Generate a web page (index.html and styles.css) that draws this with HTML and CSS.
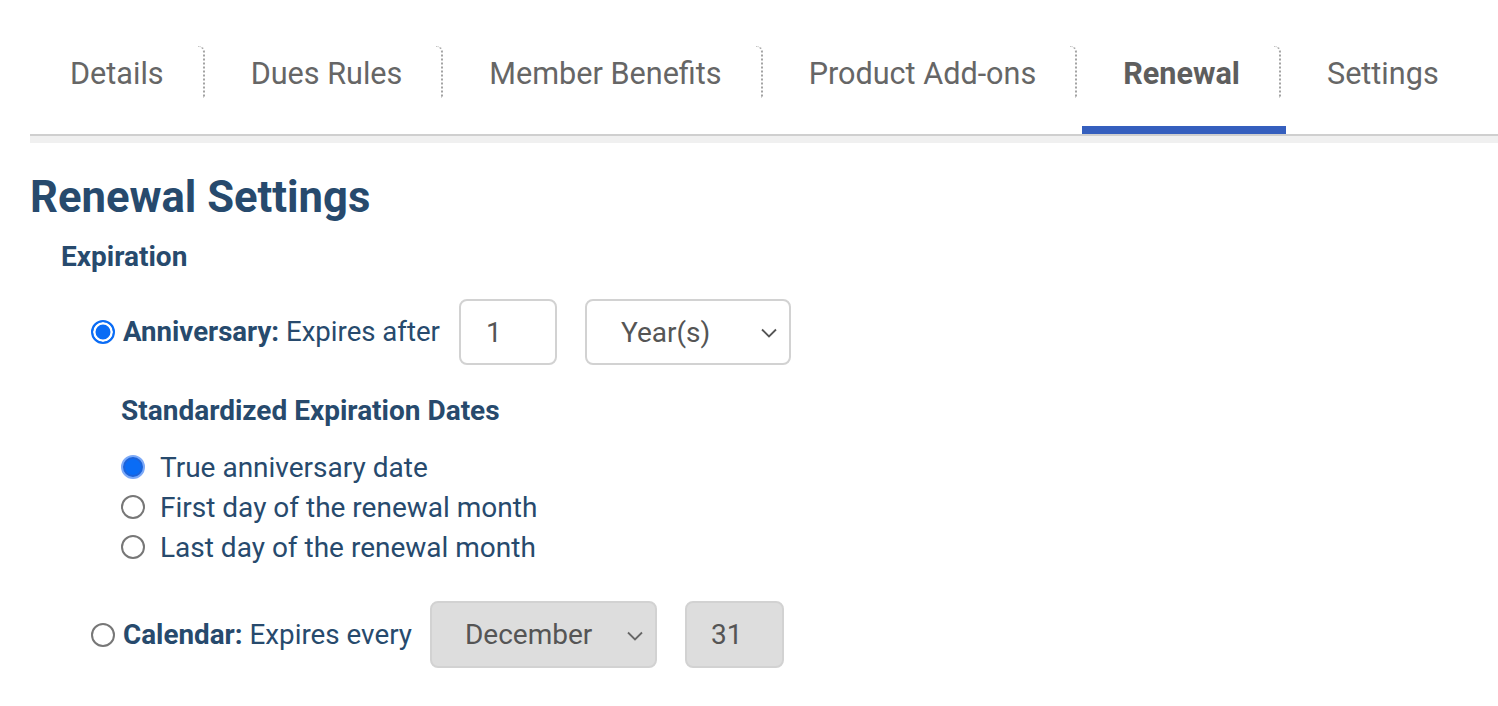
FILE: index.html
```html
<!DOCTYPE html>
<html lang="en">
<head>
<meta charset="utf-8">
<title>Renewal Settings</title>
<link rel="stylesheet" href="styles.css">
</head>
<body>
<div class="page">
  <nav class="tabs">
    <a class="tab first" href="#">Details</a>
    <a class="tab" href="#">Dues Rules</a>
    <a class="tab" href="#">Member Benefits</a>
    <a class="tab" href="#">Product Add-ons</a>
    <a class="tab active" href="#">Renewal</a>
    <a class="tab last" href="#">Settings</a>
  </nav>
  <div class="tab-band"></div>

  <h1 class="title">Renewal Settings</h1>
  <h2 class="section">Expiration</h2>

  <div class="row">
    <input type="radio" name="exp" class="radio radio-focus" checked>
    <span class="label"><b>Anniversary:</b> Expires after</span>
    <input type="text" class="field num" value="1">
    <span class="select year">Year(s)
      <svg class="chev" viewBox="0 0 16 10" width="16" height="10"><path d="M1 1.5 L8 8.5 L15 1.5" fill="none" stroke="#555" stroke-width="1.8"/></svg>
    </span>
  </div>

  <h3 class="subsection">Standardized Expiration Dates</h3>
  <div class="options">
    <label class="opt"><input type="radio" name="std" class="radio radio-fill" checked><span>True anniversary date</span></label>
    <label class="opt"><input type="radio" name="std" class="radio"><span>First day of the renewal month</span></label>
    <label class="opt"><input type="radio" name="std" class="radio"><span>Last day of the renewal month</span></label>
  </div>

  <div class="row cal">
    <input type="radio" name="exp" class="radio">
    <span class="label"><b>Calendar:</b> Expires every</span>
    <span class="select month disabled">December
      <svg class="chev" viewBox="0 0 16 10" width="16" height="10"><path d="M1 1.5 L8 8.5 L15 1.5" fill="none" stroke="#666" stroke-width="1.8"/></svg>
    </span>
    <input type="text" class="field day disabled" value="31" disabled>
  </div>
</div>
</body>
</html>
```

FILE: styles.css
```css
* { box-sizing: border-box; }
html, body { margin: 0; padding: 0; background: #fff; }
body { font-family: Roboto, "Liberation Sans", Arial, sans-serif; color: #274a6d; }

.page { padding-left: 30px; }

.tabs {
  display: flex;
  margin-top: 40px;
  border-bottom: 2px solid #cfcfcf;
}
.tab-band { height: 7px; background: #f0f0f0; }

.tab {
  position: relative;
  display: block;
  padding: 6px 46px 24px 41px;
  font-size: 30.6px;
  line-height: 56px;
  color: #666;
  text-decoration: none;
  border-bottom: 8px solid transparent;
}
.tab.first { padding-left: 40px; }
.tab::after {
  content: "";
  position: absolute;
  top: 6px;
  right: 5px;
  width: 5px;
  height: 51px;
  border-right: 2px dotted #a3a3a3;
  border-top: 1px dotted #c4c4c4;
  border-top-right-radius: 6px;
}
.tab.last::after { display: none; }
.tab.active {
  font-weight: 700;
  color: #5e5e5e;
  border-bottom-color: #355fbe;
}

.title {
  margin: 29px 0 0 0;
  font-size: 43.6px;
  line-height: 52px;
  font-weight: 700;
  color: #274a6d;
}
.section {
  margin: 17px 0 0 31px;
  font-size: 28px;
  line-height: 32px;
  font-weight: 700;
  color: #274a6d;
}

.row {
  display: flex;
  align-items: center;
  margin: 26px 0 0 61px;
  height: 66px;
}
.row.cal { margin-top: 34px; height: 67px; }

.label {
  font-size: 27.6px;
  line-height: 40px;
  color: #274a6d;
  margin-left: 8px;
}
.row.cal .label { font-size: 27.8px; }
.label b { font-weight: 700; }

.radio {
  -webkit-appearance: none;
  appearance: none;
  margin: 0;
  flex: none;
  width: 24px;
  height: 24px;
  border-radius: 50%;
  border: 2px solid #777;
  background: #fff;
}
.radio-focus {
  border: 2.5px solid #0a6cf5;
  background: #0a6cf5;
  box-shadow: inset 0 0 0 2.5px #fff;
}
.radio-fill {
  border: 2px solid #7eaaf7;
  background: #0a6cf5;
  box-shadow: inset 0 0 0 2px #1e63d8;
}

.field {
  font-family: Roboto, "Liberation Sans", Arial, sans-serif;
  font-size: 28px;
  color: #555;
  height: 66px;
  border: 2px solid #d2d2d2;
  border-radius: 8px;
  background: #fff;
  padding: 0 0 0 25px;
  outline: none;
}
.field.num { width: 98px; margin-left: 19px; }
.field.day { width: 99px; height: 67px; margin-left: 28px; padding-left: 24px; }
.field.disabled { background: #dddddd; color: #555; }

.select {
  position: relative;
  display: flex;
  align-items: center;
  height: 66px;
  border: 2px solid #d2d2d2;
  border-radius: 8px;
  background: #fff;
  font-size: 28px;
  color: #555;
  padding-left: 34px;
}
.select.year { width: 206px; margin-left: 28px; }
.select.month { width: 227px; height: 67px; margin-left: 18px; padding-left: 33px; }
.select.disabled { background: #dddddd; }
.chev { position: absolute; right: 12px; top: 50%; margin-top: -4px; }

.subsection {
  margin: 30px 0 0 91px;
  font-size: 28px;
  line-height: 32px;
  font-weight: 700;
  color: #274a6d;
}

.options {
  margin: 20px 0 0 91px;
  display: flex;
  flex-direction: column;
}
.opt {
  display: flex;
  align-items: center;
  height: 40px;
  font-size: 28px;
  color: #274a6d;
}
.opt span { margin-left: 15px; }
```
